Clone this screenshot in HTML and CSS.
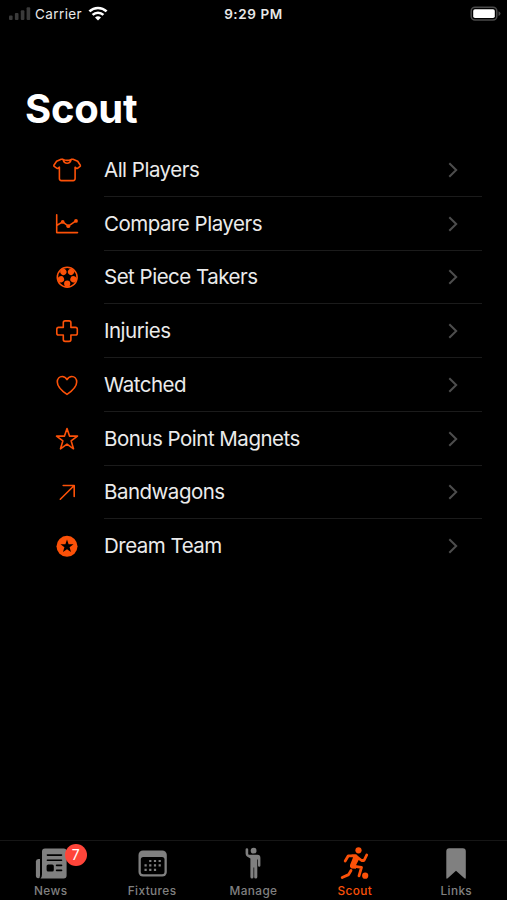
FILE: index.html
```
<!DOCTYPE html>
<html lang="en">
	<head>
		<meta charset="utf-8">
		<meta name="viewport" content="width=device-width, initial-scale=1.0">
		<title>Scout</title>
		<link rel="stylesheet" href="styles.css">
	</head>

	<body>
		<div class="status-bar">
			<div class="status-left">
				<svg class="signal" width="22" height="14" viewBox="0 0 22 14">
					<rect x="0" y="8.5" width="3.6" height="4.5" rx="1"/>
					<rect x="5.9" y="6" width="3.6" height="7" rx="1"/>
					<rect x="11.8" y="3.2" width="3.6" height="9.8" rx="1"/>
					<rect x="17.6" y="0.3" width="3.6" height="12.7" rx="1"/>
				</svg>
				<span class="carrier">Carrier</span>
				<svg class="wifi" width="20" height="16" viewBox="0 0 20 16">
					<path d="M1.4 5.4a12.4 12.4 0 0 1 17.2 0M4.6 8.9a7.8 7.8 0 0 1 10.8 0"/>
					<path class="dot" d="M7 11.6a4.4 4.4 0 0 1 6 0L10 14.6z"/>
				</svg>
			</div>
			<div class="status-time">9:29 PM</div>
			<div class="status-right">
				<svg width="31" height="16" viewBox="0 0 31 16">
					<rect class="battery-case" x="1.2" y="1.2" width="25.6" height="12.8" rx="3.8"/>
					<rect class="battery-level" x="3.2" y="3.2" width="21.6" height="8.8" rx="1.8"/>
					<path class="battery-tip" d="M28.5 5.2q2 .8 2 2.4t-2 2.4z"/>
				</svg>
			</div>
		</div>

		<h1 class="title">Scout</h1>

		<ul class="menu">
			<li class="item">
				<svg class="icon" viewBox="0 0 36 30"><path d="M12.2 4.2L7.6 6.3 4.9 10.3Q4.6 11 5.2 11.4L8 13.3Q8.7 13.7 9.3 13.1L10.4 12.2V23.6Q10.4 25.6 12.4 25.6H24.1Q26.1 25.6 26.1 23.6V12.2L27.2 13.1Q27.8 13.7 28.5 13.3L31.1 11.4Q31.6 11 31.3 10.3L28.7 6.3 24 4.2H22.3Q21.2 8.2 18.1 8.2T13.9 4.2ZM14 4.4Q18 6.3 22.3 4.4"/></svg>
				<div class="label">All Players</div>
				<svg class="arrow" viewBox="0 0 10 16"><path d="M1.3 1.2L8.2 8 1.3 14.8"/></svg>
			</li>
			<li class="item">
				<svg class="icon" viewBox="0 0 36 30"><path d="M7.7 5.7V23.6H28.5M8 16.3L13.7 12.9 19.3 17.2 27 11.9"/><g class="solid"><circle cx="13.7" cy="12.9" r="1.9"/><circle cx="19.3" cy="17.2" r="1.9"/><circle cx="27" cy="11.9" r="1.9"/></g></svg>
				<div class="label">Compare Players</div>
				<svg class="arrow" viewBox="0 0 10 16"><path d="M1.3 1.2L8.2 8 1.3 14.8"/></svg>
			</li>
			<li class="item">
				<svg class="icon" viewBox="0 0 36 30">
					<circle cx="18.2" cy="15.2" r="9.9"/>
					<g class="solid">
						<circle id="patch" cx="18.2" cy="21.7" r="3.1"/>
						<use href="#patch" transform="rotate(72 18.2 15.2)"/>
						<use href="#patch" transform="rotate(144 18.2 15.2)"/>
						<use href="#patch" transform="rotate(216 18.2 15.2)"/>
						<use href="#patch" transform="rotate(288 18.2 15.2)"/>
					</g>
				</svg>
				<div class="label">Set Piece Takers</div>
				<svg class="arrow" viewBox="0 0 10 16"><path d="M1.3 1.2L8.2 8 1.3 14.8"/></svg>
			</li>
			<li class="item">
				<svg class="icon" viewBox="0 0 36 30"><path d="M16.1 4.9H20.1Q21.9 4.9 21.9 6.7V11.4H26.5Q28.3 11.4 28.3 13.2V17.2Q28.3 19 26.5 19H21.9V23.6Q21.9 25.4 20.1 25.4H16.1Q14.3 25.4 14.3 23.6V19H9.6Q7.8 19 7.8 17.2V13.2Q7.8 11.4 9.6 11.4H14.3V6.7Q14.3 4.9 16.1 4.9Z"/></svg>
				<div class="label">Injuries</div>
				<svg class="arrow" viewBox="0 0 10 16"><path d="M1.3 1.2L8.2 8 1.3 14.8"/></svg>
			</li>
			<li class="item">
				<svg class="icon" viewBox="0 0 36 30"><path d="M18 24.4C13 21 8.3 16.6 8.3 12 8.3 8.7 10.5 6.5 13.2 6.5 15.4 6.5 17 7.7 18 9.6 19 7.7 20.6 6.5 22.8 6.5 25.5 6.5 27.7 8.7 27.7 12 27.7 16.6 23 21 18 24.4Z"/></svg>
				<div class="label">Watched</div>
				<svg class="arrow" viewBox="0 0 10 16"><path d="M1.3 1.2L8.2 8 1.3 14.8"/></svg>
			</li>
			<li class="item">
				<svg class="icon" viewBox="0 0 36 30"><path d="M18 4.6L20.5 12.1H28.5L22.1 16.8 24.5 24.8 18 20.1 11.5 24.8 13.9 16.8 7.5 12.1H15.5Z"/></svg>
				<div class="label">Bonus Point Magnets</div>
				<svg class="arrow" viewBox="0 0 10 16"><path d="M1.3 1.2L8.2 8 1.3 14.8"/></svg>
			</li>
			<li class="item">
				<svg class="icon" viewBox="0 0 36 30"><path d="M11.3 22.2L25.2 8.500M14.200 8.500H25.200V19.500"/></svg>
				<div class="label">Bandwagons</div>
				<svg class="arrow" viewBox="0 0 10 16"><path d="M1.3 1.2L8.2 8 1.3 14.8"/></svg>
			</li>
			<li class="item">
				<svg class="icon" viewBox="0 0 36 30"><circle class="solid" cx="18" cy="15.3" r="10.5"/><path class="hole" d="M18 8.6L19.6 13.300H24.500L20.600 16.300 22 21.100 18 18.200 14 21.100 15.400 16.300 11.500 13.300H16.400Z"/></svg>
				<div class="label">Dream Team</div>
				<svg class="arrow" viewBox="0 0 10 16"><path d="M1.3 1.2L8.2 8 1.3 14.8"/></svg>
			</li>
		</ul>

		<div class="tab-bar">
			<div class="tab">
				<div class="tab-icon">
					<svg viewBox="0 0 40 36">
						<path d="M11 3.5Q11 .5 14 .5H32.600Q35.600 .5 35.600 3.500V27.500Q35.600 30.500 32.600 30.500H9.500Q11 29 11 26.500Z"/>
						<path d="M9 11V27.500Q9 30.300 7.200 30.300 4.900 30.300 4.900 27.500V13.500Q4.900 11 7.300 11Z"/>
						<g class="hole"><rect x="15.600" y="6.200" width="15.700" height="1.700" rx=".8"/><rect x="15.600" y="11.400" width="15.700" height="1.700" rx=".8"/><rect x="15.600" y="16.400" width="7.200" height="7.200" rx="1.600"/><rect x="24.800" y="16.500" width="6.500" height="1.700" rx=".8"/><rect x="24.800" y="21.500" width="6.500" height="1.700" rx=".8"/></g>
					</svg>
					<span class="badge">7</span>
				</div>
				<span class="tab-name">News</span>
			</div>
			<div class="tab">
				<div class="tab-icon">
					<svg viewBox="0 0 40 36">
						<rect x="6.500" y="2.500" width="28.300" height="26" rx="4.500"/>
						<rect class="hole" x="8.800" y="9" width="23.700" height="17.200" rx="2.500"/>
						<path class="dots" d="M17.200 13H31M12.500 17.400H31M12.500 21.800H26"/>
					</svg>
				</div>
				<span class="tab-name">Fixtures</span>
			</div>
			<div class="tab">
				<div class="tab-icon">
					<svg viewBox="0 0 40 36">
						<circle cx="20.600" cy="2.700" r="2.900"/>
						<path d="M12.600 1.600Q12.600 .2 13.900 .2T15.200 1.600V6Q15.300 6.600 16 6.700H24.500Q27.400 6.700 27.400 9.700V17.500Q27.400 18.800 26.200 18.800T25 17.500V11.500H24.300V29Q24.300 30.600 22.700 30.600T21.200 29V19.500H20.500V29Q20.500 30.600 19 30.600T17.400 29V10.500L14 8.500Q12.600 7.500 12.600 5.500Z"/>
					</svg>
				</div>
				<span class="tab-name">Manage</span>
			</div>
			<div class="tab active">
				<div class="tab-icon">
					<svg viewBox="0 0 40 36">
						<circle cx="23.500" cy="2.300" r="3.100"/>
						<circle cx="30.200" cy="27.700" r="3.100"/>
						<path class="limb" d="M10.200 13L13.300 7.800H20.500L26.600 12.500H29L31.700 7M16 22.500L13.600 26.600 7.200 29.500M18 18.200L26.500 19.300 24 27.800"/>
						<path d="M16.500 6.500H21.500L24.500 10.500 21.300 16.500 21 20.800 16.500 20.500Q14.300 19.500 15 17L18 9.500Z"/>
					</svg>
				</div>
				<span class="tab-name">Scout</span>
			</div>
			<div class="tab">
				<div class="tab-icon">
					<svg viewBox="0 0 40 36"><path d="M10.300 3.300Q10.300 .2 13.300 .2H26.800Q29.800 .2 29.800 3.300V29.500Q29.800 31.400 28.400 30.300L20 22.800 11.700 30.300Q10.300 31.400 10.300 29.500Z"/></svg>
				</div>
				<span class="tab-name">Links</span>
			</div>
		</div>
	</body>
</html>
```
FILE: styles.css
```
html, body {
	margin: 0;
	height: 100%;
}
body {
	display: flex;
	flex-direction: column;
	background-color: #000;
	color: #fff;
	font-family: Inter, "Liberation Sans", sans-serif;
	overflow: hidden;
}
svg {
	display: block;
	flex: none;
}

.status-bar {
	display: grid;
	grid-template-columns: 1fr auto 1fr;
	align-items: center;
	height: 27px;
	padding: 0 6px 0 9px;
	font-size: 13.5px;
	color: #e8e8e8;
}
.status-left {
	display: flex;
	align-items: center;
}
.signal {
	fill: #3a3a3a;
}
.carrier {
	margin: 0 6px 0 4px;
	letter-spacing: 0.4px;
}
.wifi {
	fill: none;
	stroke: #fff;
	stroke-width: 2.6;
}
.wifi .dot {
	fill: #fff;
	stroke: none;
}
.status-time {
	font-weight: 600;
	letter-spacing: 0.6px;
	margin-right: 3px;
}
.status-right {
	display: flex;
	justify-content: flex-end;
}
.battery-case {
	fill: none;
	stroke: #4a4a4a;
	stroke-width: 1.5;
}
.battery-level {
	fill: #fff;
}
.battery-tip {
	fill: #4a4a4a;
}

.title {
	margin: 58px 0 10px 25px;
	font-size: 40px;
	line-height: 48px;
	font-weight: 700;
	letter-spacing: -0.3px;
}

.menu {
	flex: 1;
	margin: 0;
	padding: 0 25px 0 49px;
	list-style: none;
}
.item {
	display: grid;
	grid-template-columns: 36px 1fr 10px;
	align-items: center;
	height: 53.75px;
	padding-right: 24px;
	background: linear-gradient(#1b1b1b, #1b1b1b) 55px 100% / 100% 1px no-repeat;
}
.item:last-child {
	background: none;
}
.icon {
	width: 36px;
	height: 30px;
	fill: none;
	stroke: #fc5108;
	stroke-width: 1.6;
	stroke-linejoin: round;
	stroke-linecap: round;
}
.icon .solid {
	fill: #fc5108;
	stroke: none;
}
.icon .hole {
	fill: #000;
	stroke: none;
}
.label {
	padding-left: 19px;
	font-size: 20.5px;
	line-height: 26px;
	letter-spacing: -0.5px;
	color: #ebebeb;
}
.arrow {
	width: 10px;
	height: 16px;
	fill: none;
	stroke: #4d4d4d;
	stroke-width: 2;
}

.tab-bar {
	display: grid;
	grid-template-columns: repeat(5, 1fr);
	height: 59px;
	border-top: 1px solid #161616;
	color: #808080;
}
.tab {
	display: flex;
	flex-direction: column;
	align-items: center;
	padding-top: 7px;
}
.tab-icon {
	position: relative;
	width: 40px;
	height: 36px;
}
.tab-icon svg {
	width: 40px;
	height: 36px;
	fill: currentColor;
	overflow: visible;
}
.tab-icon .hole {
	fill: #000;
}
.dots {
	stroke: #808080;
	stroke-width: 2.2;
	stroke-dasharray: 2.2 2.5;
}
.limb {
	fill: none;
	stroke: currentColor;
	stroke-width: 2.8;
	stroke-linecap: round;
	stroke-linejoin: round;
}
.badge {
	position: absolute;
	left: 34px;
	top: -4px;
	width: 22px;
	height: 22px;
	border-radius: 50%;
	background-color: #ff453a;
	color: #fff;
	font-size: 14px;
	line-height: 22px;
	text-align: center;
}
.tab-name {
	font-size: 11.8px;
	line-height: 14px;
	font-weight: 500;
	letter-spacing: 0.4px;
}
.active {
	color: #fc5108;
}
```
